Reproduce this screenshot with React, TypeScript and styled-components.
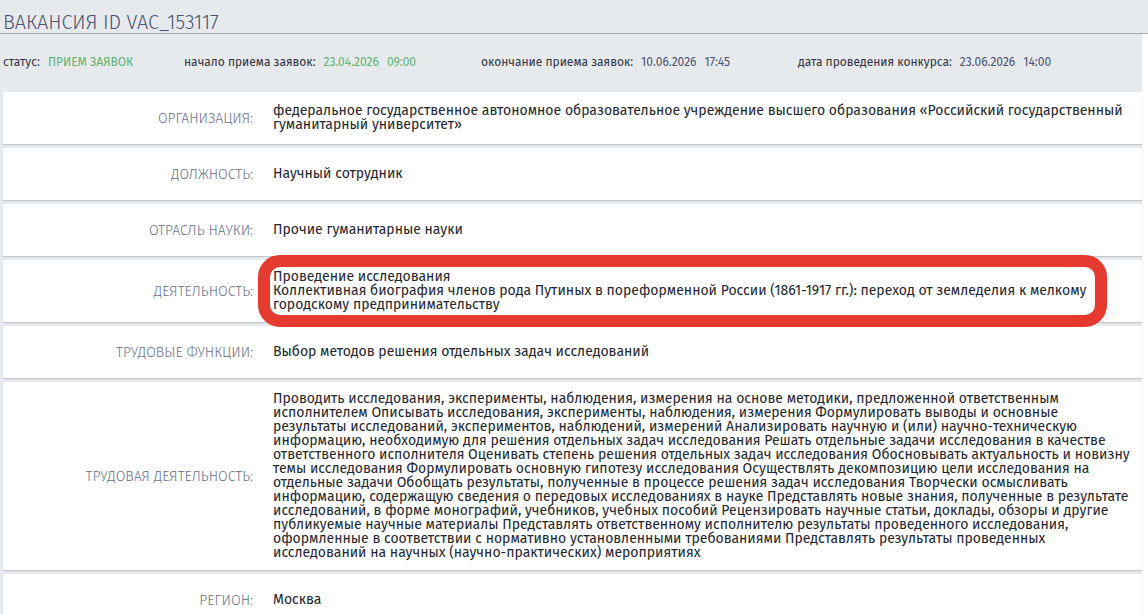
import React, { FC } from "react";
import styled, { createGlobalStyle } from "styled-components";

const GlobalStyle = createGlobalStyle`
    html, body {
        margin: 0;
        padding: 0;
        background: #fff;
        overflow: hidden;
    }
`;

interface Vacancy {
    label: string;
    lines: string[];
    height: number;
    marked?: boolean;
}

const rows: Vacancy[] = [
    {
        label: "Организация:",
        lines: ["федеральное государственное автономное образовательное учреждение высшего образования «Российский государственный гуманитарный университет»"],
        height: 52,
    },
    { label: "Должность:", lines: ["Научный сотрудник"], height: 52 },
    { label: "Отрасль науки:", lines: ["Прочие гуманитарные науки"], height: 52 },
    {
        label: "Деятельность:",
        lines: [
            "Проведение исследования",
            "Коллективная биография членов рода Путиных в пореформенной России (1861-1917 гг.): переход от земледелия к мелкому городскому предпринимательству",
        ],
        height: 62,
        marked: true,
    },
    { label: "Трудовые функции:", lines: ["Выбор методов решения отдельных задач исследований"], height: 52 },
    {
        label: "Трудовая деятельность:",
        lines: [
            "Проводить исследования, эксперименты, наблюдения, измерения на основе методики, предложенной ответственным",
            "исполнителем Описывать исследования, эксперименты, наблюдения, измерения Формулировать выводы и основные",
            "результаты исследований, экспериментов, наблюдений, измерений Анализировать научную и (или) научно-техническую",
            "информацию, необходимую для решения отдельных задач исследования Решать отдельные задачи исследования в качестве",
            "ответственного исполнителя Оценивать степень решения отдельных задач исследования Обосновывать актуальность и новизну",
            "темы исследования Формулировать основную гипотезу исследования Осуществлять декомпозицию цели исследования на",
            "отдельные задачи Обобщать результаты, полученные в процессе решения задач исследования Творчески осмысливать",
            "информацию, содержащую сведения о передовых исследованиях в науке Представлять новые знания, полученные в результате",
            "исследований, в форме монографий, учебников, учебных пособий Рецензировать научные статьи, доклады, обзоры и другие",
            "публикуемые научные материалы Представлять ответственному исполнителю результаты проведенного исследования,",
            "оформленные в соответствии с нормативно установленными требованиями Представлять результаты проведенных",
            "исследований на научных (научно-практических) мероприятиях",
        ],
        height: 188,
    },
    { label: "Регион:", lines: ["Москва"], height: 52 },
];

const App: FC = () => {
    return (
        <Page>
            <GlobalStyle />
            <Header>Вакансия ID VAC_153117</Header>
            <Main>
                <StatusBar>
                    <StatusItem $width={181}>
                        <StatusLabel>статус:</StatusLabel>
                        <StatusValue $green>ПРИЕМ ЗАЯВОК</StatusValue>
                    </StatusItem>
                    <StatusItem $width={297}>
                        <StatusLabel>начало приема заявок:</StatusLabel>
                        <StatusValue $green>23.04.2026</StatusValue>
                        <StatusValue $green>09:00</StatusValue>
                    </StatusItem>
                    <StatusItem $width={317}>
                        <StatusLabel>окончание приема заявок:</StatusLabel>
                        <StatusValue>10.06.2026</StatusValue>
                        <StatusValue>17:45</StatusValue>
                    </StatusItem>
                    <StatusItem>
                        <StatusLabel>дата проведения конкурса:</StatusLabel>
                        <StatusValue>23.06.2026</StatusValue>
                        <StatusValue>14:00</StatusValue>
                    </StatusItem>
                </StatusBar>
                <Rows>
                    {rows.map((row) => (
                        <Row key={row.label} $height={row.height}>
                            <Label>{row.label}</Label>
                            <Value $marked={row.marked}>
                                {row.lines.map((line) => (
                                    <div key={line}>{line}</div>
                                ))}
                            </Value>
                        </Row>
                    ))}
                </Rows>
            </Main>
        </Page>
    );
};

export default App;

const Page = styled.div`
    width: 1148px;
    height: 614px;
    overflow: hidden;
    background: #fff;
    font-family: "Fira Sans", "Noto Sans", sans-serif;
`;

const Header = styled.div`
    height: 34px;
    box-sizing: border-box;
    padding: 11px 0 0 3px;
    background: #e7eaed;
    border-bottom: 1px solid #a9abae;
    color: #4a5071;
    font-size: 19.8px;
    font-weight: 300;
    line-height: 22px;
    text-transform: uppercase;
    white-space: nowrap;
`;

const Main = styled.div`
    width: 1142px;
    padding-left: 3px;
    box-sizing: border-box;
    background: #e7eaed;
`;

const StatusBar = styled.div`
    height: 58px;
    padding-bottom: 2px;
    box-sizing: border-box;
    display: flex;
    align-items: center;
    font-size: 12px;
`;

const StatusItem = styled.div<{ $width?: number }>`
    width: ${(p) => (p.$width ? `${p.$width}px` : "auto")};
    display: flex;
    gap: 8px;
    white-space: nowrap;
`;

const StatusLabel = styled.span`
    color: #30343f;
`;

const StatusValue = styled.span<{ $green?: boolean }>`
    color: ${(p) => (p.$green ? "#5cb370" : "#4a5071")};
`;

const Rows = styled.div`
    display: flex;
    flex-direction: column;
    gap: 4px;
`;

const Row = styled.div<{ $height: number }>`
    height: ${(p) => p.$height}px;
    flex-shrink: 0;
    background: #fff;
    box-shadow: 0 1px 1px #c4c7cb;
    display: flex;
    align-items: center;
`;

const Label = styled.div`
    width: 250px;
    flex-shrink: 0;
    text-align: right;
    color: #6a6f8c;
    font-size: 14px;
    font-weight: 300;
    text-transform: uppercase;
`;

const Value = styled.div<{ $marked?: boolean }>`
    position: relative;
    margin-left: 20px;
    width: 866px;
    color: #23262e;
    font-size: 14px;
    line-height: 14px;

    ${(p) => p.$marked && `
        &::after {
            content: "";
            position: absolute;
            inset: -15px 32px -15px -15px;
            border: 12px solid #e53a30;
            border-radius: 22px;
            pointer-events: none;
        }
    `}
`;
